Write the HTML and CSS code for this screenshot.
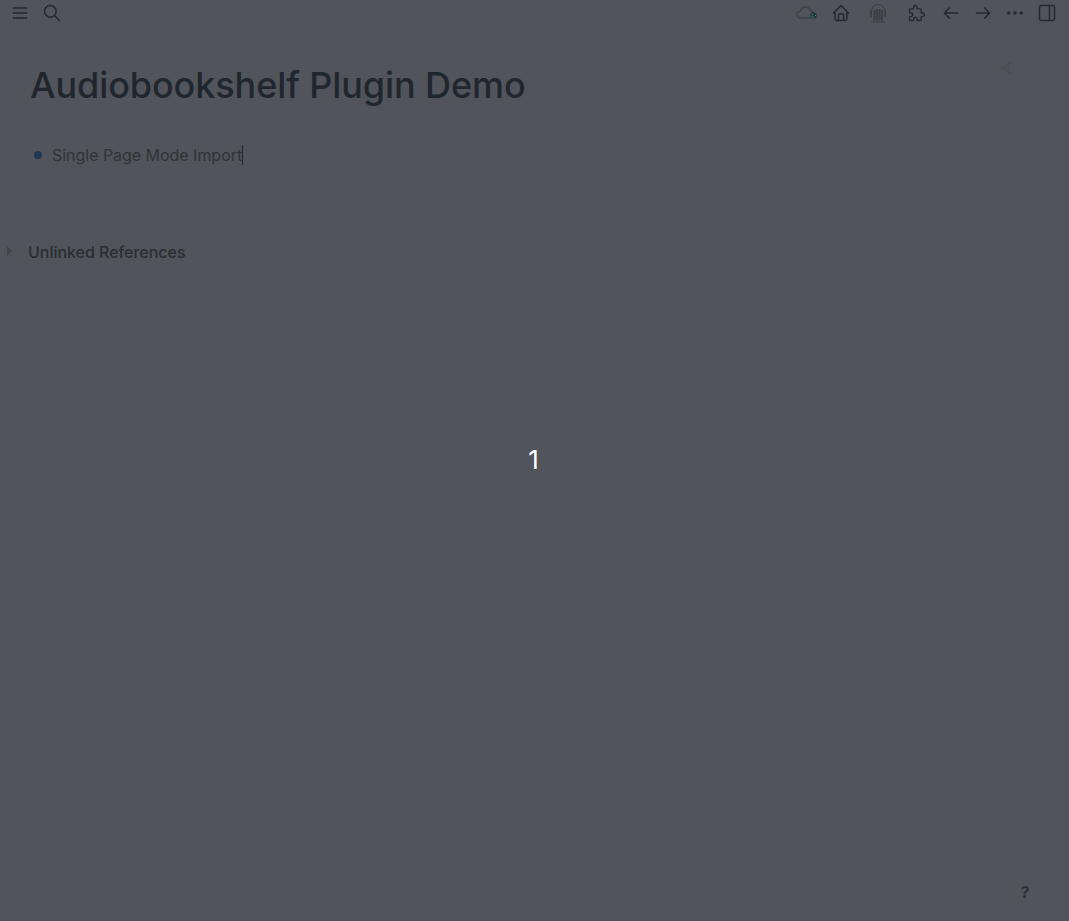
FILE: index.html
```html
<!DOCTYPE html>
<html lang="en">
<head>
<meta charset="utf-8">
<title>Audiobookshelf Plugin Demo</title>
<link rel="stylesheet" href="styles.css">
</head>
<body>
<header class="toolbar">
  <div class="group left">
    <svg class="icon" viewBox="0 0 24 24"><path d="M4 6h16M4 12h16M4 18h16"/></svg>
    <svg class="icon" viewBox="0 0 24 24"><circle cx="10" cy="10" r="7"/><path d="M21 21l-6-6"/></svg>
  </div>
  <div class="group right">
    <span class="cloud">
      <svg viewBox="0 0 22 16"><path class="cloud-line" d="M14 13H4.500C2.200 13 .8 11.500 .8 9.600 .8 7.800 2.300 6.400 4.500 6.400 5 3.500 7 2 9.300 2c2.500 0 4.600 1.500 5 4.200 2 0 3.400 1 3.700 2.600"/><circle class="cloud-dot" cx="17.500" cy="10.500" r="3.200"/><path class="cloud-spark" d="M16 9.500h1M19 10.500h1M17 12.500h1M15.500 11.500h1"/></svg>
    </span>
    <svg class="icon home" viewBox="0 0 24 24"><path d="M5 12H3l9-9 9 9h-2M5 12v7a2 2 0 0 0 2 2h10a2 2 0 0 0 2-2v-7M9 21v-6a2 2 0 0 1 2-2h2a2 2 0 0 1 2 2v6"/></svg>
    <svg class="shelf" viewBox="0 0 18 20"><path class="shelf-line" d="M2.500 9V7.500a6.500 6 0 0 1 13 0V9M2.500 19h13"/><path class="shelf-ear" d="M2 8v5M16 8v5"/><path class="shelf-books" d="M5.500 7v10.500M8 6v11.500M10.500 6v11.500M13 7v10.500"/></svg>
    <svg class="icon puzzle" viewBox="0 0 24 24"><path d="M4 7h3a1 1 0 0 0 1-1V5a2 2 0 0 1 4 0v1a1 1 0 0 0 1 1h3a1 1 0 0 1 1 1v3a1 1 0 0 0 1 1h1a2 2 0 0 1 0 4h-1a1 1 0 0 0-1 1v3a1 1 0 0 1-1 1h-3a1 1 0 0 1-1-1v-1a2 2 0 0 0-4 0v1a1 1 0 0 1-1 1H4a1 1 0 0 1-1-1v-3a1 1 0 0 1 1-1h1a2 2 0 0 0 0-4H4a1 1 0 0 1-1-1V8a1 1 0 0 1 1-1"/></svg>
    <svg class="icon" viewBox="0 0 24 24"><path d="M4 12h16M4 12l6 6M4 12l6-6"/></svg>
    <svg class="icon" viewBox="0 0 24 24"><path d="M4 12h16M14 18l6-6M14 6l6 6"/></svg>
    <svg class="icon dots" viewBox="0 0 24 24"><circle cx="4.500" cy="12" r="1"/><circle cx="12" cy="12" r="1"/><circle cx="19.500" cy="12" r="1"/></svg>
    <svg class="icon" viewBox="0 0 24 24"><rect x="3" y="3" width="18" height="18" rx="2"/><path d="M15 3v18"/></svg>
  </div>
</header>
<main class="page">
  <div class="title-row">
    <h1 class="title">Audiobookshelf Plugin Demo</h1>
    <svg class="graph" viewBox="0 0 12 14"><path d="M0 7h3l2-3h3M6 7h4M3 7l2 3h3M7 4V2h3M7 10v2h3"/></svg>
  </div>
  <div class="block"><span class="bullet"></span><span class="block-text">Single Page Mode Import</span><span class="caret"></span></div>
  <div class="references"><span class="arrow"></span><h2 class="ref-title">Unlinked References</h2></div>
</main>
<div class="help">?</div>
<div class="countdown">1</div>
</body>
</html>
```
FILE: styles.css
```css
body {
  margin: 0;
  height: 921px;
  overflow: hidden;
  position: relative;
  background: #51545b;
  color: #2d3034;
  font-family: Inter, "Liberation Sans", sans-serif;
}
svg { display: block; fill: none; stroke-linecap: round; stroke-linejoin: round; }
.toolbar {
  display: flex;
  justify-content: space-between;
  height: 26px;
  padding: 0 12px 0 10px;
}
.group { display: flex; align-items: center; gap: 12px; }
.icon { width: 20px; height: 20px; stroke: #22292f; stroke-width: 1.8; }
.dots { stroke-width: 2.2; }
.cloud { width: 22px; margin-right: 1px; }
.cloud-line { stroke: #3d4145; stroke-width: 1.3; }
.cloud-dot { fill: #24363f; }
.cloud-spark { stroke: #14a070; stroke-width: 1; stroke-linecap: butt; }
.shelf { width: 18px; height: 20px; margin: 0 8px 0 6px; }
.shelf-line { stroke: #3b3f44; stroke-width: 1; }
.shelf-ear { stroke: #3b3f44; stroke-width: 2; }
.shelf-books { stroke: #3b3f44; stroke-width: 1.9; stroke-linecap: butt; }
.puzzle { margin-right: 2px; stroke-width: 1.6; }
.title-row {
  display: flex;
  justify-content: space-between;
  padding: 36px 56px 0 30px;
}
.title {
  margin: 0;
  font-size: 36px;
  line-height: 46px;
  font-weight: 500;
  letter-spacing: -.09px;
  color: #1f262d;
}
.graph { width: 12px; height: 14px; margin-top: -1px; stroke: #44494d; stroke-width: .8; stroke-dasharray: 1.2 .8; }
.block {
  display: flex;
  align-items: center;
  height: 24px;
  margin-top: 35px;
  padding-left: 34px;
  font-size: 16px;
  color: #303336;
}
.bullet { width: 8px; height: 8px; border-radius: 50%; background: #20384f; margin-right: 10px; }
.block-text { letter-spacing: -.03px; }
.caret { width: 1px; height: 20px; background: #202327; }
.references {
  display: flex;
  align-items: center;
  height: 24px;
  margin-top: 73px;
  padding-left: 7px;
}
.arrow {
  border-left: 5px solid #414548;
  border-top: 5px solid transparent;
  border-bottom: 5px solid transparent;
  margin: -2px 16px 0 0;
}
.ref-title { margin: 0; font-size: 16px; font-weight: 500; letter-spacing: -.03px; color: #2a2d31; }
.help {
  position: absolute;
  right: 39.5px;
  bottom: 19px;
  font-size: 16px;
  line-height: 20px;
  font-weight: 700;
}
.countdown {
  position: absolute;
  inset: 0 2px 2px 0;
  display: flex;
  align-items: center;
  justify-content: center;
  font-size: 26px;
  color: #fff;
}
```
